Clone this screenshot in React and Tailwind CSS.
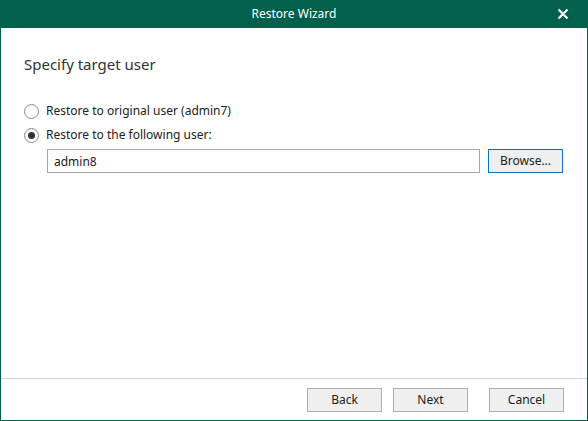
import React, { useState } from "react";

const App = () => {
  const [mode, setMode] = useState("other");
  const [user, setUser] = useState("admin8");

  return (
    <div className="w-[588px] h-[421px] flex flex-col bg-white text-[12px] text-[#222] font-['Noto_Sans',sans-serif]">
      {/* Title bar */}
      <div className="h-[28px] bg-[#00604b] flex items-center relative shrink-0">
        <div className="flex-1 text-center text-white text-[12px]">Restore Wizard</div>
        <button className="absolute right-[17px] top-[6px] w-[16px] h-[16px] flex items-center justify-center">
          <svg width="12" height="12" viewBox="0 0 12 12">
            <path d="M1.5 1.5 L10.5 10.5 M10.5 1.5 L1.5 10.5" stroke="white" strokeWidth="2.2" />
          </svg>
        </button>
      </div>

      {/* Body */}
      <div className="flex-1 flex flex-col border-x border-[#00604b]">
        <div className="flex-1 pl-[23px] pr-[24px] pt-[26px]">
          <h3 className="text-[15px] text-[#333] leading-[20px]">Specify target user</h3>

          <div className="mt-[28px] flex flex-col gap-[6px]">
            <label className="flex items-center gap-[7px] h-[18px] cursor-pointer" onClick={() => setMode("original")}>
              <span className="w-[15px] h-[15px] rounded-full border border-[#8a8a8a] bg-white flex items-center justify-center">
                {mode === "original" && <span className="w-[7px] h-[7px] rounded-full bg-[#333]" />}
              </span>
              <span>Restore to original user (admin7)</span>
            </label>
            <label className="flex items-center gap-[7px] h-[18px] cursor-pointer" onClick={() => setMode("other")}>
              <span className="w-[15px] h-[15px] rounded-full border border-[#8a8a8a] bg-white flex items-center justify-center">
                {mode === "other" && <span className="w-[7px] h-[7px] rounded-full bg-[#333]" />}
              </span>
              <span>Restore to the following user:</span>
            </label>
          </div>

          <div className="mt-[5px] ml-[23px] flex items-center gap-[8px]">
            <input
              type="text"
              value={user}
              onChange={(e) => setUser(e.target.value)}
              className="w-[433px] h-[24px] border border-[#a8a8a8] px-[6px] outline-none text-[12px]"
            />
            <button className="w-[75px] h-[24px] border border-[#0a72c4] bg-[#efefef]">Browse...</button>
          </div>
        </div>

        {/* Footer */}
        <div className="h-[42px] border-t border-[#d2d2d2] flex items-center justify-end pr-[23px] shrink-0">
          <button className="w-[75px] h-[24px] border border-[#adadad] bg-[#efefef]">Back</button>
          <button className="w-[75px] h-[24px] border border-[#adadad] bg-[#efefef] ml-[11px]">Next</button>
          <button className="w-[75px] h-[24px] border border-[#adadad] bg-[#efefef] ml-[21px]">Cancel</button>
        </div>
      </div>
      <div className="h-[1px] bg-[#00604b] shrink-0" />
    </div>
  );
};

export default App;
